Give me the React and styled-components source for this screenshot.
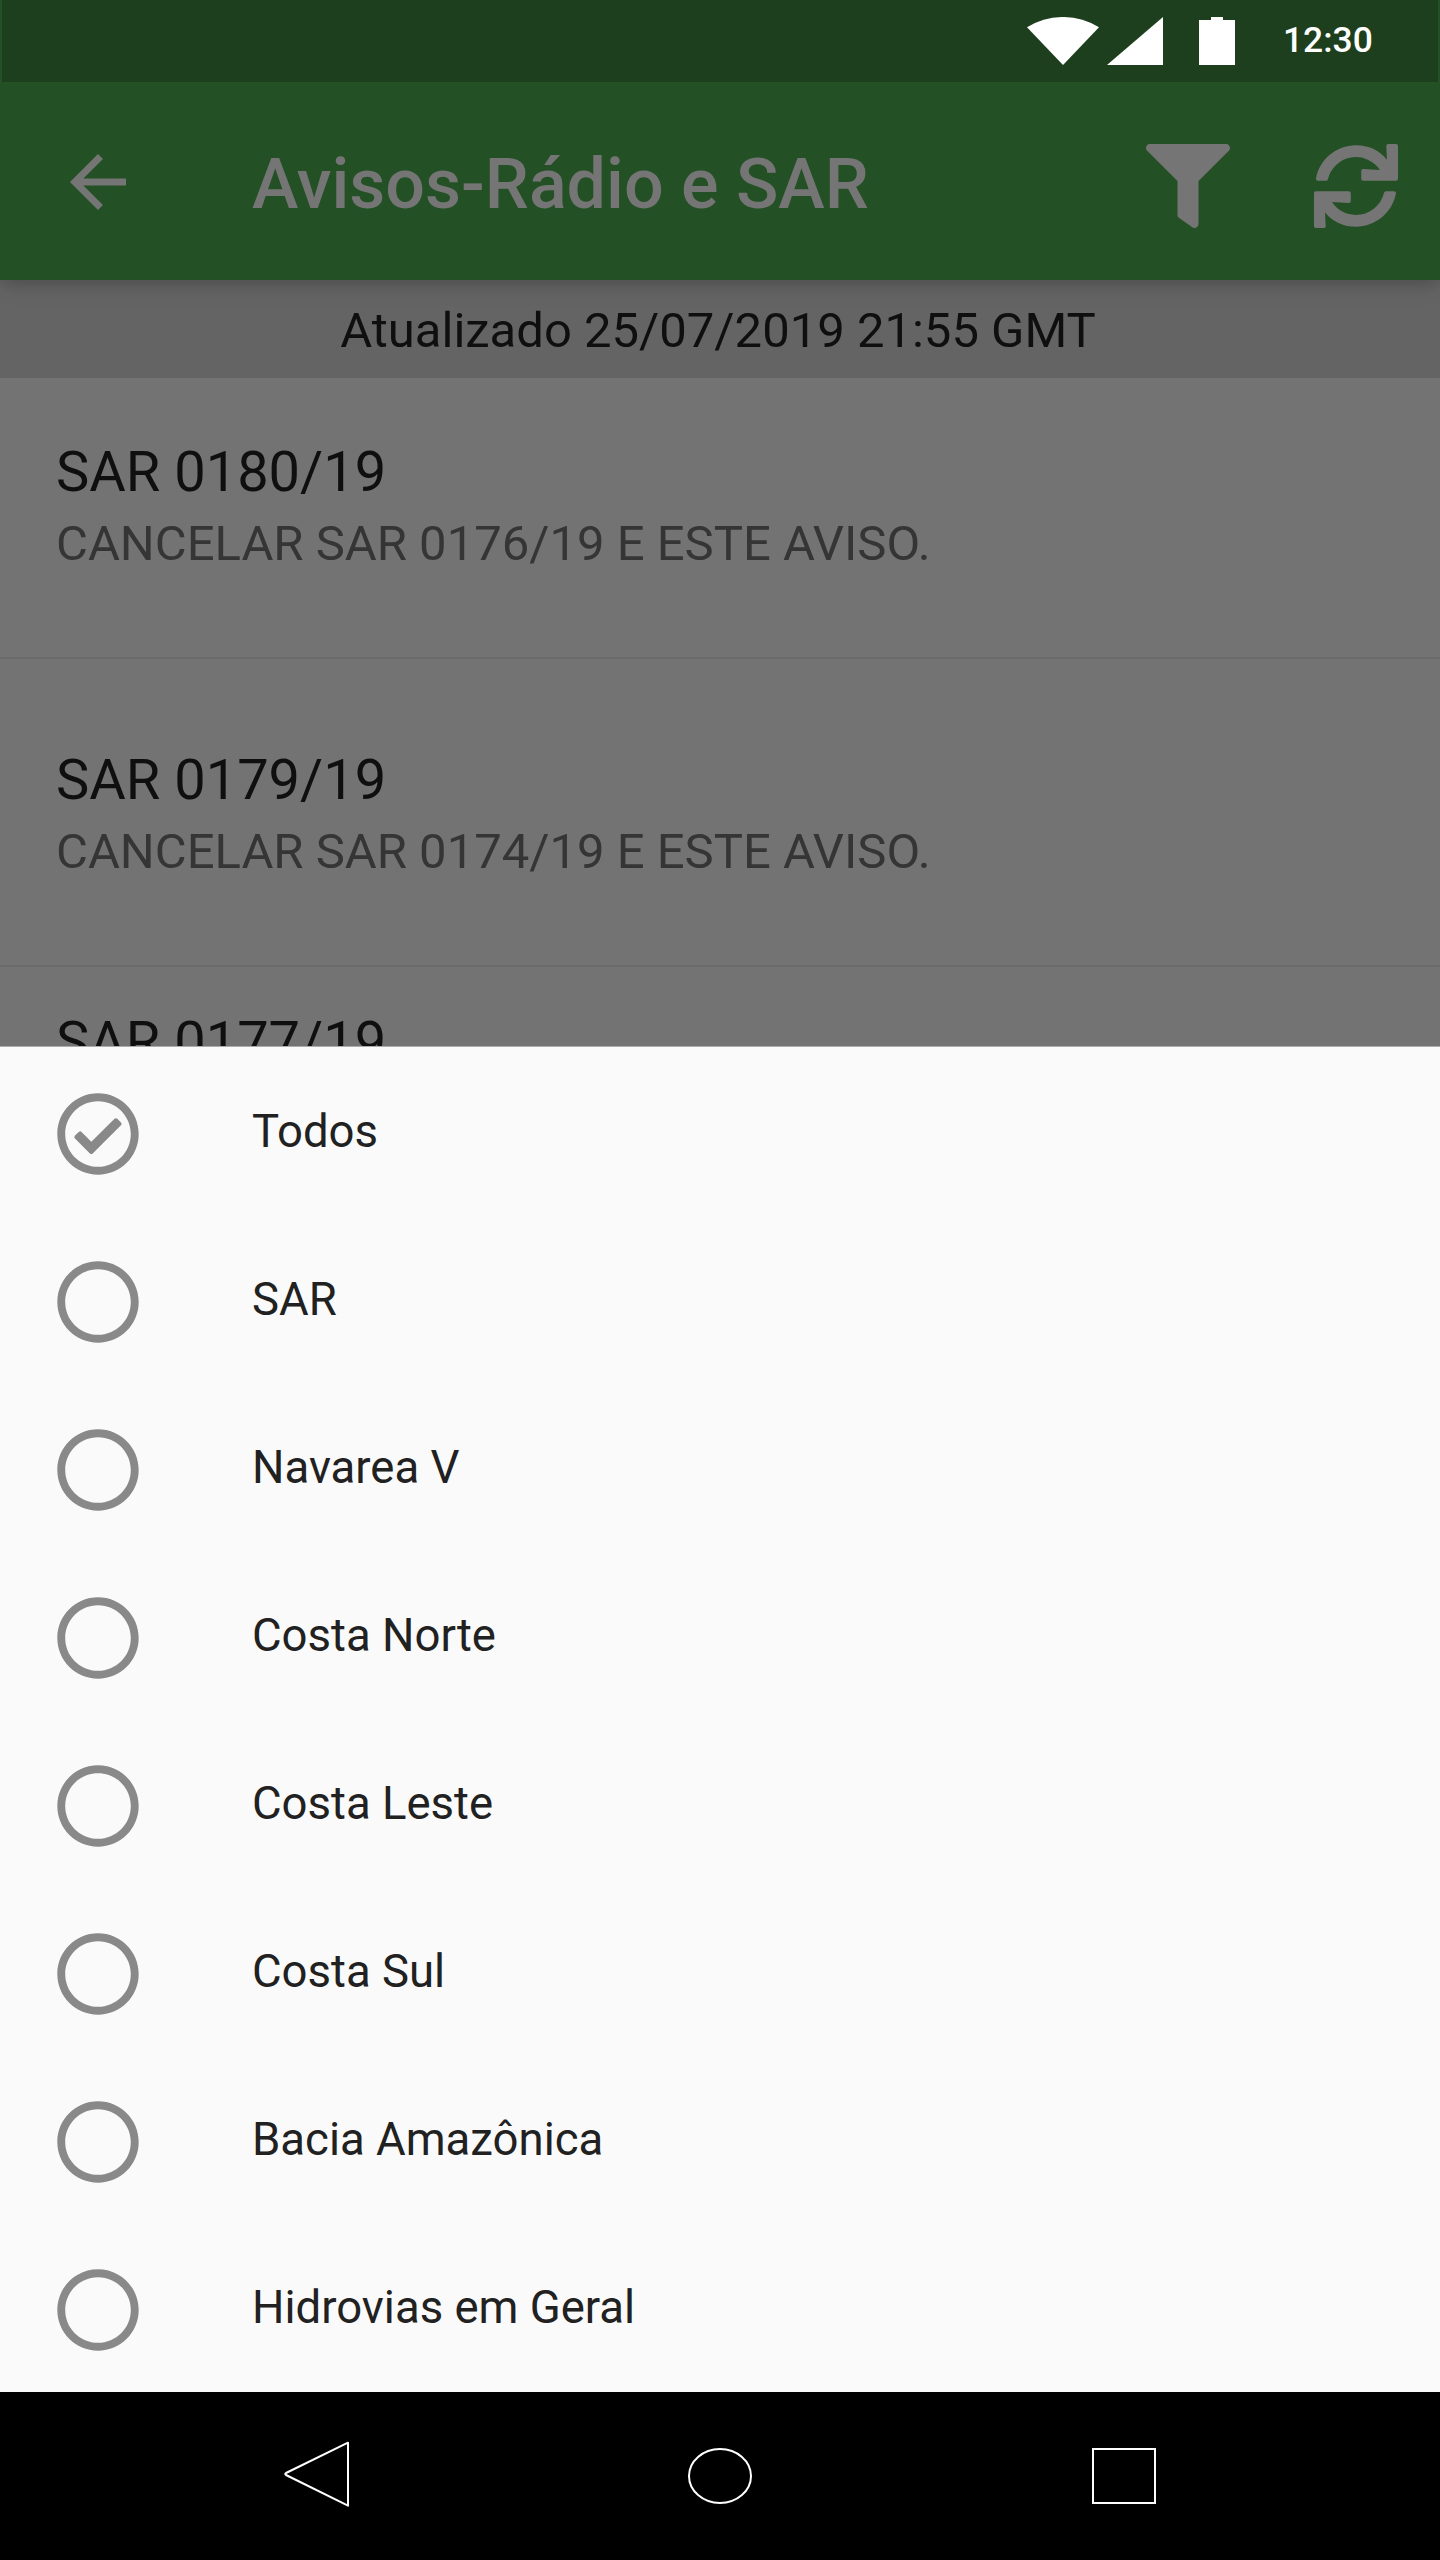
import React from "react";
import styled, { createGlobalStyle } from "styled-components";
import { FaFilter, FaSync, FaRegCircle, FaRegCheckCircle } from "react-icons/fa";
import { MdArrowBack } from "react-icons/md";

const GlobalStyle = createGlobalStyle`
  * { box-sizing: border-box; }
  body { margin: 0; background: #000; font-family: Roboto, "Liberation Sans", sans-serif; }
`;

const Screen = styled.div`
  width: 1440px;
  height: 2560px;
  display: flex;
  flex-direction: column;
  overflow: hidden;
  background: #737373;
`;

const StatusBar = styled.div`
  flex: none;
  display: flex;
  justify-content: flex-end;
  align-items: flex-start;
  height: 82px;
  margin: 0 2px;
  padding: 17px 0 0;
  background: #1e3f1e;
`;

const StatusIcons = styled.svg`
  flex: none;
  width: 210px;
  height: 48px;
  margin-right: 46px;
  fill: #fff;
`;

const Clock = styled.div`
  width: 155px;
  margin-top: 2px;
  font-size: 35.4px;
  font-weight: 500;
  line-height: 42px;
  color: #fff;
`;

const Header = styled.div`
  flex: none;
  position: relative;
  z-index: 1;
  height: 280px;
  background: #245026;
  box-shadow: 0 7px 14px -3px rgba(0, 0, 0, 0.2), 0 4px 30px rgba(0, 0, 0, 0.05);
`;

const AppBar = styled.div`
  display: flex;
  align-items: center;
  height: 198px;
  padding: 2px 42px 0 56px;
  color: #757575;
`;

const Title = styled.h1`
  flex: 1;
  margin: 4px 0 0 112px;
  font-size: 70px;
  font-weight: 500;
  line-height: 82px;
`;

const Actions = styled.div`
  display: flex;
  gap: 84px;
  margin-top: 7px;
`;

const UpdateBand = styled.div`
  flex: none;
  height: 98px;
  padding: 22px 4px 0 0;
  text-align: center;
  font-size: 49px;
  line-height: 57px;
  color: #0f0f0f;
  background: #646464;
`;

const NoticeList = styled.div`
  flex: none;
  height: 668px;
  overflow: hidden;
`;

const Notice = styled.div`
  height: ${(p) => p.$height}px;
  padding: ${(p) => p.$top}px 56px 0;
  border-bottom: 2px solid #6b6b6b;
`;

const NoticeTitle = styled.div`
  font-size: 56px;
  line-height: 66px;
  color: #0f0f0f;
`;

const NoticeText = styled.div`
  margin-top: 10px;
  font-size: 49px;
  line-height: 58px;
  color: #353535;
`;

const Sheet = styled.div`
  flex: 1;
  min-height: 0;
  overflow: hidden;
  padding-top: 3px;
  border-top: 1px solid #acacac;
  background: #fafafa;
`;

const Option = styled.div`
  display: flex;
  height: 168px;
  padding: 42px 56px 0;
  color: #898989;
`;

const OptionLabel = styled.div`
  margin: 13px 0 0 112px;
  font-size: 45.5px;
  line-height: 54px;
  color: #212121;
`;

const NavBar = styled.div`
  flex: none;
  display: flex;
  align-items: center;
  height: 168px;
  background: #000;
`;

const NavIcons = styled.svg`
  width: 1440px;
  height: 168px;
  fill: none;
  stroke: #fff;
  stroke-width: 2;
`;

const notices = [
  { title: "SAR 0180/19", text: "CANCELAR SAR 0176/19 E ESTE AVISO.", height: 281, top: 61 },
  { title: "SAR 0179/19", text: "CANCELAR SAR 0174/19 E ESTE AVISO.", height: 308, top: 88 },
  { title: "SAR 0177/19", text: "", height: 308, top: 42 },
];

const options = [
  "Todos",
  "SAR",
  "Navarea V",
  "Costa Norte",
  "Costa Leste",
  "Costa Sul",
  "Bacia Amazônica",
  "Hidrovias em Geral",
];

export default function App() {
  return (
    <Screen>
      <GlobalStyle />
      <Header>
        <StatusBar>
          <StatusIcons viewBox="0 0 210 48">
            <path d="M0 10.300 A68 68 0 0 1 72 10.300 L36 48Z" />
            <path d="M80 48 L136 0 V48Z" />
            <path d="M172 3 H184 V0 H196 V3 H208 V48 H172Z" />
          </StatusIcons>
          <Clock>12:30</Clock>
        </StatusBar>
        <AppBar>
          <MdArrowBack size={84} />
          <Title>Avisos-Rádio e SAR</Title>
          <Actions>
            <FaFilter size={84} />
            <FaSync size={84} />
          </Actions>
        </AppBar>
      </Header>
      <UpdateBand>Atualizado 25/07/2019 21:55 GMT</UpdateBand>
      <NoticeList>
        {notices.map((n) => (
          <Notice key={n.title} $height={n.height} $top={n.top}>
            <NoticeTitle>{n.title}</NoticeTitle>
            {n.text && <NoticeText>{n.text}</NoticeText>}
          </Notice>
        ))}
      </NoticeList>
      <Sheet>
        {options.map((label, i) => (
          <Option key={label}>
            {i === 0 ? <FaRegCheckCircle size={84} /> : <FaRegCircle size={84} />}
            <OptionLabel>{label}</OptionLabel>
          </Option>
        ))}
      </Sheet>
      <NavBar>
        <NavIcons viewBox="0 0 1440 168">
          <path d="M348 50.700 V113.700 L286 83 Q284.500 82 286 81Z" strokeLinejoin="round" />
          <ellipse cx="720" cy="84" rx="31" ry="27" />
          <rect x="1093" y="57" width="62" height="54" />
        </NavIcons>
      </NavBar>
    </Screen>
  );
}
